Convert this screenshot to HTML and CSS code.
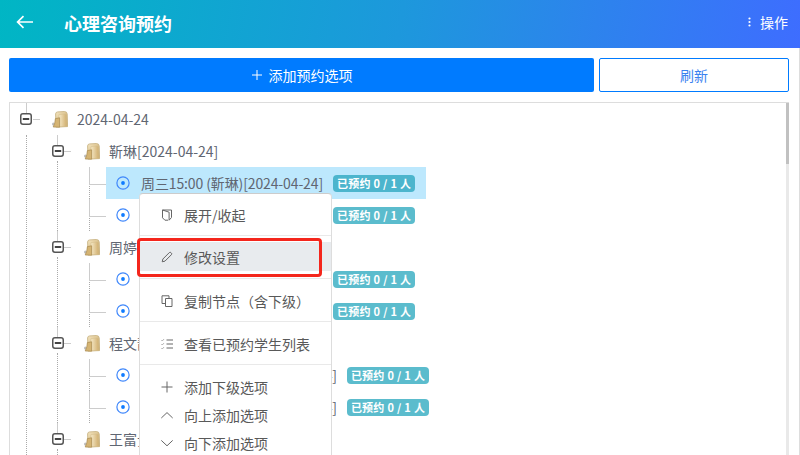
FILE: index.html
```html
<!DOCTYPE html>
<html lang="zh">
<head>
<meta charset="utf-8">
<title>心理咨询预约</title>
<link rel="stylesheet" href="styles.css">
</head>
<body>
<svg class="defs" width="0" height="0" aria-hidden="true">
  <defs>
    <linearGradient id="fg" x1="0" y1="0" x2="1" y2="1">
      <stop offset="0" stop-color="#f4e6c2"/><stop offset="1" stop-color="#c6a260"/>
    </linearGradient>
    <linearGradient id="fg2" x1="0" y1="0" x2="1" y2="0">
      <stop offset="0" stop-color="#f5e8c6"/><stop offset="1" stop-color="#d0ae6e"/>
    </linearGradient>
    <symbol id="sw" viewBox="0 0 12 12">
      <rect x=".75" y=".75" width="10.5" height="10.5" rx="2.2" fill="#fff" stroke="#555" stroke-width="1.5"/>
      <rect x="2.8" y="5" width="6.4" height="2" fill="#444"/>
    </symbol>
    <symbol id="folder" viewBox="0 0 16 17">
      <ellipse cx="1.4" cy="13" rx="1.4" ry="1.5" fill="#bdbdbd"/>
      <path d="M3.6 3 Q3.6 1.1 5.6 .9 L12.5 .5 Q15 .5 15.2 3 L15.6 15.6 L4 16 Z" fill="url(#fg)" stroke="#c4ad7a" stroke-width=".8"/>
      <path d="M7 3.6 L13 3 Q14.3 3 14.4 4.2 L14.8 15.4 L7 15.8 Z" fill="url(#fg2)" stroke="#d3bd8a" stroke-width=".5"/>
      <path d="M1.2 16 Q3.2 12.5 3.4 7.6 L7.6 6.8 L7.6 16.2 Z" fill="#d5b473" stroke="#a88a50" stroke-width=".7"/>
    </symbol>
    <symbol id="radio" viewBox="0 0 14 14">
      <circle cx="7" cy="7" r="6.1" fill="none" stroke="#3f87fb" stroke-width="1.2"/>
      <circle cx="7" cy="7" r="1.9" fill="#0f7bff"/>
    </symbol>
  </defs>
</svg>

<header class="topbar">
  <svg class="back" width="18" height="14" viewBox="0 0 18 14"><path d="M17 7H2M7.5 1.2 1.6 7l5.9 5.8" fill="none" stroke="#fff" stroke-width="1.7"/></svg>
  <h1 class="title">心理咨询预约</h1>
  <div class="ops">
    <svg width="3" height="10" viewBox="0 0 3 10"><circle cx="1.5" cy="1.5" r="1.1" fill="#fff"/><circle cx="1.5" cy="5" r="1.1" fill="#fff"/><circle cx="1.5" cy="8.5" r="1.1" fill="#fff"/></svg>
    <span>操作</span>
  </div>
</header>

<main class="page">
  <div class="actions">
    <button class="btn btn-add"><svg width="10" height="10" viewBox="0 0 10 10"><path d="M5 0v10M0 5h10" stroke="#fff" stroke-width="1"/></svg>添加预约选项</button>
    <button class="btn btn-refresh">刷新</button>
  </div>

  <section class="tree">
    <div class="row root-row">
      <svg class="switch root-switch"><use href="#sw"/></svg>
      <svg class="folder"><use href="#folder"/></svg>
      <span class="label">2024-04-24</span>
    </div>
    <ul class="branch">
      <li class="group-node">
        <div class="row"><svg class="switch"><use href="#sw"/></svg><svg class="folder"><use href="#folder"/></svg><span class="label">靳琳[2024-04-24]</span></div>
        <ul class="leaves">
          <li class="row leaf selected"><span class="pill"><svg class="radio"><use href="#radio"/></svg><span class="label">周三15:00 (靳琳)[2024-04-24]</span></span><span class="badge">已预约 0 / 1 人</span></li>
          <li class="row leaf"><span class="pill"><svg class="radio"><use href="#radio"/></svg><span class="label">周四15:00 (靳琳)[2024-04-24]</span></span><span class="badge">已预约 0 / 1 人</span></li>
        </ul>
      </li>
      <li class="group-node">
        <div class="row"><svg class="switch"><use href="#sw"/></svg><svg class="folder"><use href="#folder"/></svg><span class="label">周婷[2024-04-24]</span></div>
        <ul class="leaves">
          <li class="row leaf"><span class="pill"><svg class="radio"><use href="#radio"/></svg><span class="label">周三15:00 (周婷)[2024-04-24]</span></span><span class="badge">已预约 0 / 1 人</span></li>
          <li class="row leaf"><span class="pill"><svg class="radio"><use href="#radio"/></svg><span class="label">周四15:00 (周婷)[2024-04-24]</span></span><span class="badge">已预约 0 / 1 人</span></li>
        </ul>
      </li>
      <li class="group-node">
        <div class="row"><svg class="switch"><use href="#sw"/></svg><svg class="folder"><use href="#folder"/></svg><span class="label">程文静[2024-04-24]</span></div>
        <ul class="leaves">
          <li class="row leaf"><span class="pill"><svg class="radio"><use href="#radio"/></svg><span class="label">周三15:00 (程文静)[2024-04-24]</span></span><span class="badge">已预约 0 / 1 人</span></li>
          <li class="row leaf"><span class="pill"><svg class="radio"><use href="#radio"/></svg><span class="label">周四15:00 (程文静)[2024-04-24]</span></span><span class="badge">已预约 0 / 1 人</span></li>
        </ul>
      </li>
      <li class="group-node">
        <div class="row"><svg class="switch"><use href="#sw"/></svg><svg class="folder"><use href="#folder"/></svg><span class="label">王富贵[2024-04-24]</span></div>
      </li>
    </ul>
    <div class="scroll-track"><div class="scroll-thumb"></div></div>
  </section>

  <nav class="menu">
    <div class="menu-group g-first">
      <div class="menu-item"><svg class="mi" viewBox="0 0 12 12"><path d="M1.5 1h9v7.5l-2.4 2.7V3.2L1.5 1v7.8l2.4 2.4H7" fill="none" stroke="#666" stroke-width="1"/></svg>展开/收起</div>
    </div>
    <div class="menu-group g-second">
      <div class="menu-item active"><svg class="mi" viewBox="0 0 12 12"><path d="M1.2 10.8 1.9 8 8.3 1.6a1.1 1.1 0 0 1 1.6 0l.5.5a1.1 1.1 0 0 1 0 1.6L4 10.1Z" fill="none" stroke="#666" stroke-width="1"/></svg>修改设置</div>
    </div>
    <div class="menu-group">
      <div class="menu-item"><svg class="mi" viewBox="0 0 12 12"><path d="M4.5 3.5H11v8H4.5ZM4.5 8.5H1V.8H8v2.7" fill="none" stroke="#666" stroke-width="1"/></svg>复制节点（含下级）</div>
    </div>
    <div class="menu-group">
      <div class="menu-item"><svg class="mi" viewBox="0 0 12 12"><path d="M5.5 2H12M5.5 6H12M5.5 10H12" stroke="#666" stroke-width="1"/><path d="M.5 2 1.5 3 3 1M.5 6l1 1L3 5M.5 10l1 1L3 9" fill="none" stroke="#888" stroke-width=".9" stroke-dasharray="1.4 .7"/></svg>查看已预约学生列表</div>
    </div>
    <div class="menu-group">
      <div class="menu-item"><svg class="mi" viewBox="0 0 12 12"><path d="M6 .5v11M.5 6h11" stroke="#666" stroke-width="1"/></svg>添加下级选项</div>
      <div class="menu-item"><svg class="mi" viewBox="0 0 12 12"><path d="M.3 9 6 3.6 11.7 9" fill="none" stroke="#666" stroke-width="1"/></svg>向上添加选项</div>
      <div class="menu-item"><svg class="mi" viewBox="0 0 12 12"><path d="M.3 3.4 6 8.8l5.7-5.4" fill="none" stroke="#666" stroke-width="1"/></svg>向下添加选项</div>
    </div>
  </nav>
  <div class="callout"></div>
</main>
</body>
</html>
```

FILE: styles.css
```css
* { box-sizing: border-box; }
html, body { margin: 0; height: 455px; overflow: hidden; background: #fff; }
body { font-family: "Noto Sans CJK SC", "Liberation Sans", sans-serif; font-size: 14px; color: #606266; }
.defs { position: absolute; }
ul { list-style: none; margin: 0; padding: 0; }

.topbar {
  height: 48px;
  display: flex;
  align-items: center;
  padding: 0 12px 0 16px;
  color: #fff;
  background: linear-gradient(100deg, #00b6c4 0%, #1d98dc 50%, #3e6dff 100%);
}
.back { margin-top: -4px; }
.title { margin: -3px 0 0 30px; font-size: 18px; font-weight: 700; line-height: 24px; flex: 1; }
.ops { display: flex; align-items: center; gap: 9px; line-height: 20px; margin-top: -4px; }

.page { position: relative; height: 407px; padding: 10px 10px 0 9px; border-right: 1px solid #ddd; }
.actions { display: flex; gap: 5px; height: 34px; }
.btn { font: inherit; border-radius: 2px; padding: 0; display: flex; align-items: center; justify-content: center; }
.btn-add { width: 585px; background: #007bff; border: 0; color: #fff; gap: 7px; padding-left: 1px; }
.btn-refresh { flex: 1; background: #fff; border: 1px solid #007bff; color: #3a82f0; }

.tree { position: relative; margin-top: 10px; height: 360px; overflow: hidden; border: 1px solid #ddd; border-bottom: 0; border-right: 0; }
.row { display: flex; align-items: center; height: 32px; position: relative; white-space: nowrap; }
.label { line-height: 20px; color: #606672; }
.switch { width: 12px; height: 12px; flex: none; position: relative; }
.folder { width: 16px; height: 17px; margin-left: 20px; margin-right: 9px; flex: none; }
.root-row { padding-left: 10px; }
.root-row::before { content: ""; position: absolute; left: 16px; top: 0; height: 10px; border-left: 1px solid #ccc; }
.root-row::after { content: ""; position: absolute; left: 23px; top: 16px; width: 7px; border-top: 1px solid #ccc; }

.branch { margin-left: 16px; border-left: 1px dotted #aaa; padding-left: 25px; }
.group-node { position: relative; }
.group-node::before { content: ""; position: absolute; left: 5px; top: 26px; bottom: 0; border-left: 1px dotted #aaa; }
.group-node > .row::before { content: ""; position: absolute; left: 5px; top: 0; height: 10px; border-left: 1px solid #ccc; }
.group-node > .row::after { content: ""; position: absolute; left: 12px; top: 16px; width: 7px; border-top: 1px solid #ccc; }

.leaves { margin-left: 37px; border-left: 1px dotted #aaa; }
.leaf::before { content: ""; position: absolute; left: -1px; top: 0; width: 16px; height: 17px; border-left: 1px solid #ccc; border-bottom: 1px solid #ccc; }
.leaf .label { letter-spacing: -.12px; }
.pill { display: flex; align-items: center; height: 32px; margin-left: 16px; padding: 0 3px 0 10px; }
.selected .pill { width: 320px; background: #bde8fd; position: relative; }
.radio { width: 14px; height: 14px; margin-right: 11px; flex: none; }
.badge { margin-left: 7px; height: 17px; padding: 0 4px; line-height: 16px; font-size: 11px; letter-spacing: .2px; word-spacing: .2px; font-weight: 700; color: #fff; background: #5bbccd; border-radius: 4px; position: relative; }
.selected .badge { margin-left: -93px; background: #4cb5cd; }

.scroll-track { position: absolute; right: 0; top: 0; bottom: 0; width: 3px; background: #e9e9e9; }
.scroll-thumb { height: 61px; background: #c1c1c1; }

.menu { position: absolute; left: 139px; top: 145px; width: 193px; height: 270px; background: #fff; border: 1px solid #ddd; border-top-color: #ccc; border-bottom: 0; border-radius: 4px 4px 0 0; color: #595959; overflow: hidden; }
.menu-group { padding: 8px 0 6px; border-bottom: 1px solid #e9e9e9; }
.menu-group:last-child { border-bottom: 0; }
.g-first { padding-top: 7px; }
.g-second { padding: 6px 0 7px; }
.menu-item { display: flex; align-items: center; height: 28px; padding-left: 21px; line-height: 20px; }
.menu-item.active { height: 29px; background: #e8ebee; }
.mi { width: 12px; height: 12px; margin-right: 11px; flex: none; }

.callout { position: absolute; left: 137px; top: 190px; width: 185px; height: 39px; border: 3px solid #f4261c; border-radius: 4px; }
```
